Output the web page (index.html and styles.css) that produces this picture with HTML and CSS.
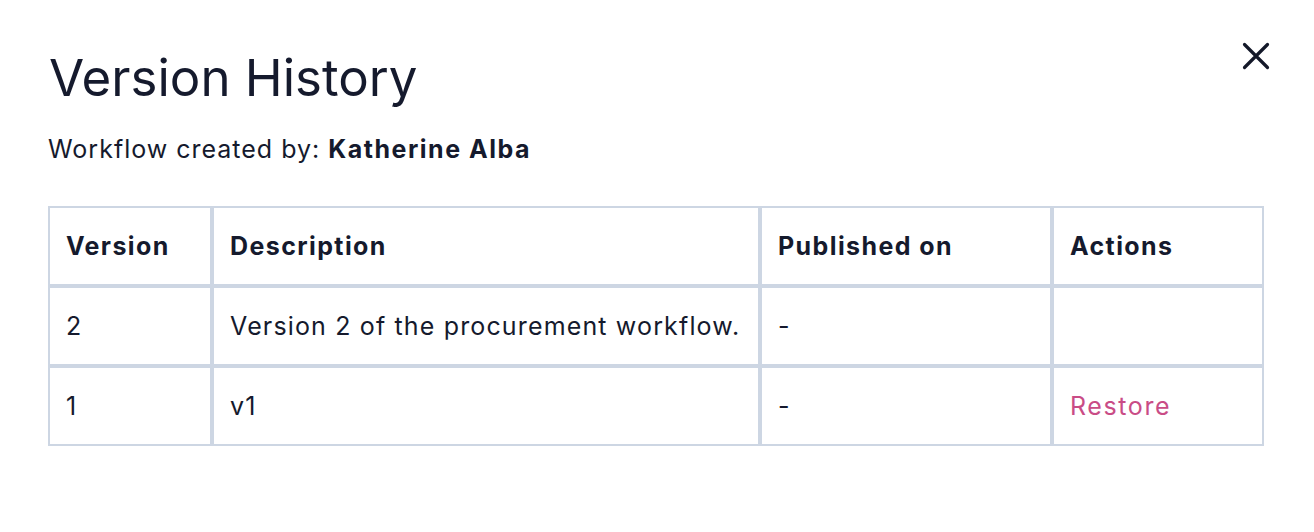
FILE: index.html
```html
<!DOCTYPE html>
<html>
<head>
<meta charset="utf-8">
<link rel="stylesheet" href="styles.css">
</head>
<body>
<div class="modal">
  <div class="header">
    <h1 class="title">Version History</h1>
    <button class="close" aria-label="Close">
      <svg width="28" height="28" viewBox="0 0 28 28"><path d="M2.5 2.5 L25.5 25.5 M25.5 2.5 L2.5 25.5" stroke="#131829" stroke-width="3.2" stroke-linecap="round" fill="none"/></svg>
    </button>
  </div>
  <p class="meta">Workflow created by: <strong>Katherine Alba</strong></p>
  <table class="versions">
    <thead>
      <tr><th class="c1">Version</th><th class="c2">Description</th><th class="c3">Published on</th><th class="c4">Actions</th></tr>
    </thead>
    <tbody>
      <tr><td>2</td><td>Version 2 of the procurement workflow.</td><td>-</td><td></td></tr>
      <tr><td>1</td><td>v1</td><td>-</td><td><a class="restore" href="#">Restore</a></td></tr>
    </tbody>
  </table>
</div>
</body>
</html>
```
FILE: styles.css
```css
html, body {
  margin: 0;
  padding: 0;
  background: #ffffff;
}
body {
  font-family: Inter, "Liberation Sans", sans-serif;
  color: #151a2d;
}
.modal {
  padding: 42px 44px 0 48px;
}
.header {
  display: flex;
  justify-content: space-between;
  align-items: flex-start;
}
.title {
  margin: 4px 0 0 1px;
  font-size: 51px;
  font-weight: 400;
  line-height: 64px;
  letter-spacing: 0;
}
.close {
  border: 0;
  background: none;
  padding: 0;
  margin: 0;
  width: 28px;
  height: 28px;
  cursor: pointer;
}
.close svg { display: block; }
.meta {
  margin: 23px 0 0 0;
  font-size: 25px;
  line-height: 32px;
  letter-spacing: 1px;
}
.meta strong {
  font-weight: 700;
  letter-spacing: 1.5px;
}
.versions {
  margin-top: 41px;
  width: 1216px;
  table-layout: fixed;
  border-collapse: separate;
  border-spacing: 0;
  font-size: 25px;
  letter-spacing: 1.15px;
}
.versions th, .versions td {
  border: 2px solid #cdd6e3;
  height: 80px;
  padding: 0 14px 0 16px;
  text-align: left;
  vertical-align: middle;
  box-sizing: border-box;
  white-space: nowrap;
  overflow: visible;
}
.versions th {
  font-weight: 700;
  letter-spacing: 1.4px;
}
.c1 { width: 164px; }
.c2 { width: 548px; }
.c3 { width: 292px; }
.c4 { width: 212px; }
.restore {
  color: #c94c86;
  text-decoration: none;
  letter-spacing: 1.6px;
}
```
